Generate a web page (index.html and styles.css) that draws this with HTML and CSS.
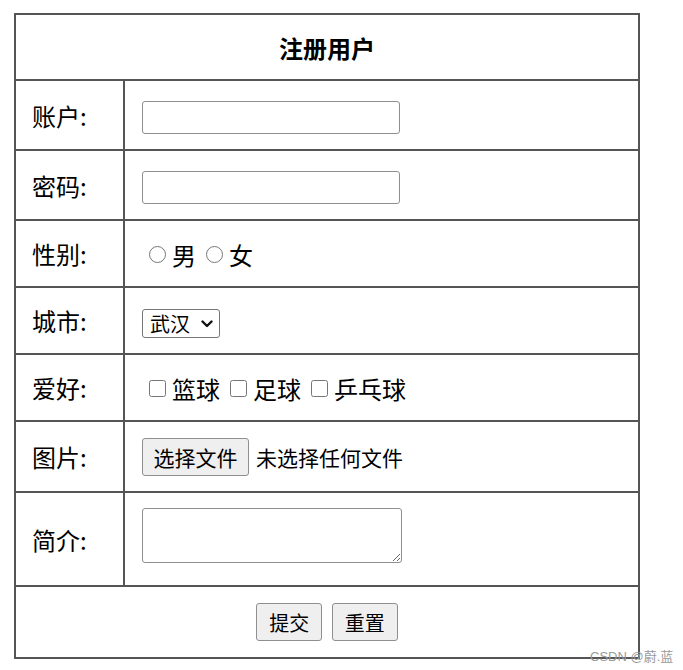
FILE: index.html
```html
<!DOCTYPE html>
<html lang="zh-CN">

<head>
  <meta charset="UTF-8">
  <title>注册用户</title>
  <link rel="stylesheet" href="styles.css">
</head>

<body>
  <form class="reg-form">
    <table class="reg-table">
      <tr class="row-head">
        <th colspan="2">注册用户</th>
      </tr>
      <tr class="row-std">
        <td class="label">账户:</td>
        <td class="field"><input type="text" class="text-input"></td>
      </tr>
      <tr class="row-std">
        <td class="label">密码:</td>
        <td class="field"><input type="password" class="text-input"></td>
      </tr>
      <tr class="row-short">
        <td class="label">性别:</td>
        <td class="field">
          <label class="opt"><input type="radio" name="sex">男</label><label class="opt"><input type="radio" name="sex">女</label>
        </td>
      </tr>
      <tr class="row-short">
        <td class="label">城市:</td>
        <td class="field">
          <span class="select-wrap">
            <select class="city">
              <option>武汉</option>
              <option>北京</option>
              <option>上海</option>
            </select>
            <svg class="chevron" width="12" height="8" viewBox="0 0 12 8">
              <path d="M1.5 1.5 L6 6 L10.5 1.5" fill="none" stroke="#111" stroke-width="2.4" stroke-linecap="round" stroke-linejoin="round"/>
            </svg>
          </span>
        </td>
      </tr>
      <tr class="row-short">
        <td class="label">爱好:</td>
        <td class="field">
          <label class="opt"><input type="checkbox">篮球</label><label class="opt"><input type="checkbox">足球</label><label class="opt"><input type="checkbox">乒乓球</label>
        </td>
      </tr>
      <tr class="row-file">
        <td class="label">图片:</td>
        <td class="field">
          <span class="file-pick"><button type="button" class="btn btn-file">选择文件</button><span class="file-name">未选择任何文件</span></span>
        </td>
      </tr>
      <tr class="row-tall">
        <td class="label">简介:</td>
        <td class="field"><textarea class="intro"></textarea></td>
      </tr>
      <tr class="row-foot">
        <td colspan="2" class="actions">
          <button type="submit" class="btn">提交</button>
          <button type="reset" class="btn">重置</button>
        </td>
      </tr>
    </table>
  </form>

  <div class="watermark">CSDN @蔚.蓝</div>
</body>

</html>
```

FILE: styles.css
```css
body {
  margin: 0;
  font-family: "Noto Sans CJK SC", "Noto Sans", sans-serif;
  font-size: 24px;
  color: #000;
  background: #fff;
}

.reg-form {
  padding: 13px 0 0 14px;
}

.reg-table {
  width: 626px;
  border-collapse: collapse;
  border: 2px solid #555;
}

.reg-table th,
.reg-table td {
  border: 2px solid #555;
  padding: 0;
}

.reg-table th {
  font-size: 24px;
  font-weight: bold;
  height: 64px;
}

.row-std td {
  height: 68px;
}

.row-short td {
  height: 65px;
}

.row-file td {
  height: 69px;
}

.row-tall td {
  height: 92px;
}

.row-foot td {
  height: 70px;
}

.label {
  width: 91px;
  padding-left: 16px !important;
}

.field {
  padding-left: 17px !important;
}

.text-input {
  width: 258px;
  height: 33px;
  box-sizing: border-box;
  border: 1px solid #8f8f8f;
  border-radius: 3px;
  margin: 0;
  vertical-align: middle;
}

.opt {
  display: inline-flex;
  align-items: center;
}

.opt input {
  width: 17px;
  height: 17px;
  margin: 0 6px 0 7px;
}

.opt + .opt input {
  margin-left: 10px;
}

.select-wrap {
  position: relative;
  display: inline-block;
  vertical-align: middle;
}

.city {
  appearance: none;
  font-family: inherit;
  font-size: 20px;
  line-height: 27px;
  height: 29px;
  width: 78px;
  padding: 0 0 0 7px;
  border: 1px solid #767676;
  border-radius: 3px;
  background: #fff;
  color: #000;
  margin: 0;
  display: block;
}

.chevron {
  position: absolute;
  left: 59px;
  top: 11px;
  pointer-events: none;
}

.btn {
  font-family: inherit;
  font-size: 20px;
  height: 38px;
  padding: 0 12px;
  border: 1px solid #8f8f8f;
  border-radius: 3px;
  background: #efefef;
  color: #000;
  margin: 0;
}

.btn-file {
  font-size: 21px;
  width: 107px;
  padding: 0;
}

.file-pick {
  display: inline-flex;
  align-items: center;
  font-size: 21px;
}

.file-name {
  margin-left: 7px;
}

.intro {
  width: 260px;
  height: 55px;
  box-sizing: border-box;
  border: 1px solid #8f8f8f;
  border-radius: 3px;
  margin: 0 0 8px;
  vertical-align: middle;
}

.actions {
  text-align: center;
}

.actions .btn + .btn {
  margin-left: 4px;
}

.watermark {
  position: absolute;
  left: 590px;
  top: 646px;
  font-family: "Liberation Sans", "Noto Sans CJK SC", sans-serif;
  font-size: 13px;
  color: #9a9a9a;
}
```
